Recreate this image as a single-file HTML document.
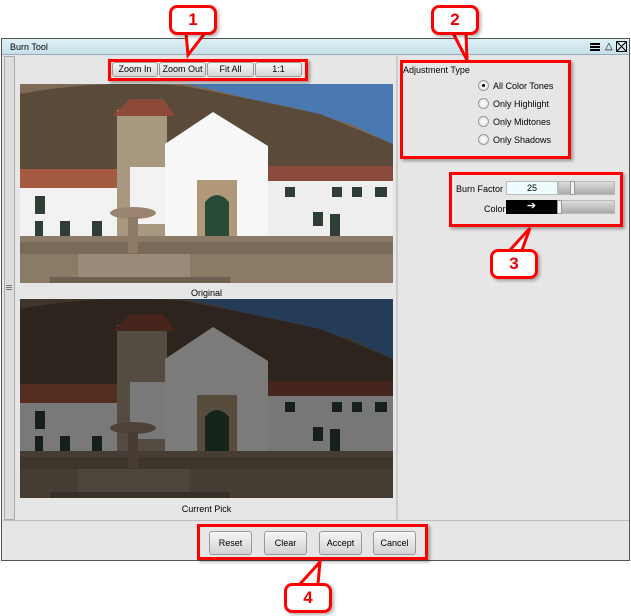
<!DOCTYPE html>
<html><head><style>
*{margin:0;padding:0;box-sizing:border-box}
body{width:631px;height:616px;background:#fff;position:relative;font-family:"Liberation Sans",sans-serif;font-size:9px;color:#000;overflow:hidden}
.abs{position:absolute}
.win{left:1px;top:38px;width:629px;height:523px;border:1px solid #555;background:#e6e6e6}
.title{left:2px;top:39px;width:627px;height:16px;background:linear-gradient(#dff0f6,#c6dfe9);border-bottom:1px solid #9ab}
.btn{position:absolute;height:15px;border:1px solid #999;border-radius:3px;background:linear-gradient(#f6f6f6,#d6d6d6);text-align:center;line-height:13px;font-size:9px}
.bbtn{position:absolute;top:531px;width:43px;height:24px;border:1px solid #999;border-radius:3px;background:linear-gradient(#f6f6f6,#d3d3d3);text-align:center;line-height:22px;font-size:9px}
.red{position:absolute;border:3px solid #f00;box-shadow:2px 2px 3px rgba(0,0,0,.35)}
.call{position:absolute;width:48px;height:30px;border:3px solid #f00;border-radius:8px;background:#fff;color:#e00;font-weight:bold;font-size:17px;text-align:center;line-height:24px;box-shadow:2px 2px 3px rgba(0,0,0,.3)}
.radio{position:absolute;left:478px;width:11px;height:11px;border-radius:50%;border:1px solid #999;background:radial-gradient(#fff,#ddd)}
.rl{position:absolute;left:493px;font-size:9px}
</style></head><body>
<div class="abs win"></div>
<div class="abs title"></div>
<div class="abs" style="left:10px;top:42px">Burn Tool</div>
<div class="abs" style="left:590px;top:43px;width:10px;height:2px;background:#000;box-shadow:0 3px 0 #000,0 6px 0 #000"></div>
<div class="abs" style="left:605px;top:41px;font-size:10px">&#9651;</div>
<div class="abs" style="left:616px;top:41px;width:11px;height:11px;border:1px solid #000;background:linear-gradient(45deg,transparent 45%,#000 45%,#000 55%,transparent 55%),linear-gradient(-45deg,transparent 45%,#000 45%,#000 55%,transparent 55%)"></div>
<!-- left strip -->
<div class="abs" style="left:4px;top:56px;width:11px;height:464px;border:1px solid #aaa;background:#ddd"></div>
<div class="abs" style="left:6px;top:285px;width:6px;height:1px;background:#777;box-shadow:0 2px 0 #777,0 4px 0 #777"></div>
<div class="abs" style="left:15px;top:56px;width:383px;height:464px;border-right:2px solid #ccc"></div>
<div class="abs" style="left:3px;top:520px;width:626px;height:1px;background:#bbb"></div>
<!-- zoom buttons -->
<div class="btn" style="left:112px;top:62px;width:46px">Zoom In</div>
<div class="btn" style="left:159px;top:62px;width:47px">Zoom Out</div>
<div class="btn" style="left:207px;top:62px;width:47px">Fit All</div>
<div class="btn" style="left:255px;top:62px;width:47px">1:1</div>
<svg width="0" height="0" style="position:absolute"><defs>
<g id="ph">
<rect width="373" height="199" fill="#7e6a55"/>
<path d="M165 0H373V60L330 40 280 25 230 15 190 5Z" fill="#4a78b0"/>
<path d="M0 10Q80 -5 165 2L230 15 300 30 373 60V100H0Z" fill="#5a4a3a"/>
<rect x="0" y="85" width="97" height="20" fill="#a45a40"/>
<rect x="0" y="104" width="97" height="54" fill="#f2f2f2"/>
<rect x="97" y="26" width="50" height="128" fill="#a89880"/>
<path d="M93 32L110 15H143L155 32Z" fill="#8e4a38"/>
<path d="M145 60L193 28 248 62V152H145Z" fill="#f7f7f7"/>
<rect x="110" y="83" width="35" height="57" fill="#f2f2f2"/>
<rect x="248" y="82" width="125" height="16" fill="#8a4a3c"/>
<rect x="248" y="97" width="125" height="56" fill="#eeeeee"/>
<rect x="177" y="96" width="40" height="56" fill="#b09878"/>
<path d="M185 152V118Q197 104 209 118V152Z" fill="#2a4a38"/>
<g fill="#2e3e34"><rect x="15" y="112" width="10" height="18"/><rect x="15" y="137" width="8" height="21"/><rect x="40" y="137" width="10" height="21"/><rect x="72" y="137" width="10" height="21"/><rect x="265" y="103" width="10" height="10"/><rect x="312" y="103" width="10" height="10"/><rect x="332" y="103" width="10" height="10"/><rect x="355" y="103" width="12" height="10"/><rect x="293" y="128" width="10" height="14"/><rect x="310" y="130" width="10" height="22"/></g>
<rect x="0" y="152" width="373" height="47" fill="#8a7a66"/>
<rect x="0" y="158" width="373" height="12" fill="#7a6a58"/>
<ellipse cx="113" cy="129" rx="23" ry="6" fill="#9a8470"/>
<rect x="108" y="133" width="10" height="36" fill="#8e7a66"/>
<rect x="58" y="170" width="112" height="29" fill="#9a8a78"/>
<rect x="30" y="193" width="180" height="6" fill="#6e6050"/>
</g></defs></svg>
<svg class="abs" style="left:20px;top:84px" width="373" height="199"><use href="#ph"/></svg>
<div class="abs" style="left:20px;top:288px;width:373px;text-align:center">Original</div>
<svg class="abs" style="left:20px;top:299px" width="373" height="199"><use href="#ph"/><rect width="373" height="199" fill="#000" opacity=".5"/></svg>
<div class="abs" style="left:20px;top:504px;width:373px;text-align:center">Current Pick</div>
<!-- right panel -->
<div class="abs" style="left:403px;top:65px">Adjustment Type</div>
<div class="radio" style="top:80px"><div style="width:3px;height:3px;background:#000;border-radius:50%;margin:3px"></div></div>
<div class="rl" style="top:81px">All Color Tones</div>
<div class="radio" style="top:98px"></div><div class="rl" style="top:99px">Only Highlight</div>
<div class="radio" style="top:116px"></div><div class="rl" style="top:117px">Only Midtones</div>
<div class="radio" style="top:134px"></div><div class="rl" style="top:135px">Only Shadows</div>
<div class="abs" style="left:456px;top:184px">Burn Factor</div>
<div class="abs" style="left:506px;top:181px;width:52px;height:14px;background:#eefcff;border:1px solid #bbb;text-align:center;line-height:12px">25</div>
<div class="abs" style="left:558px;top:181px;width:57px;height:14px;background:linear-gradient(#ddd,#aaa);border:1px solid #bbb"></div>
<div class="abs" style="left:570px;top:181px;width:5px;height:14px;background:#f2f2f2;border:1px solid #999"></div>
<div class="abs" style="left:484px;top:204px">Color</div>
<div class="abs" style="left:506px;top:200px;width:51px;height:14px;background:#000;color:#fff;text-align:center;line-height:13px;font-size:11px">&#10132;</div>
<div class="abs" style="left:557px;top:200px;width:58px;height:14px;background:linear-gradient(#ddd,#aaa);border:1px solid #bbb"></div>
<div class="abs" style="left:557px;top:200px;width:5px;height:14px;background:#f2f2f2;border:1px solid #999"></div>
<!-- bottom buttons -->
<div class="bbtn" style="left:209px">Reset</div>
<div class="bbtn" style="left:264px">Clear</div>
<div class="bbtn" style="left:319px">Accept</div>
<div class="bbtn" style="left:373px">Cancel</div>
<!-- red boxes -->
<div class="red" style="left:108px;top:59px;width:200px;height:22px"></div>
<div class="red" style="left:400px;top:60px;width:171px;height:99px"></div>
<div class="red" style="left:449px;top:172px;width:174px;height:55px"></div>
<div class="red" style="left:197px;top:524px;width:231px;height:36px"></div>
<!-- callouts -->
<svg class="abs" style="left:0;top:0" width="631" height="616">
<g stroke="#f00" stroke-width="3" fill="#fff">
<path d="M186 33L188 55 205 33"/><path d="M453 33L467 60 466 33"/><path d="M510 250L530 228 522 250"/><path d="M300 584L320 562 318 584"/>
</g></svg>
<div class="call" style="left:169px;top:5px">1</div>
<div class="call" style="left:431px;top:5px">2</div>
<div class="call" style="left:490px;top:249px">3</div>
<div class="call" style="left:284px;top:583px">4</div>
</body></html>
